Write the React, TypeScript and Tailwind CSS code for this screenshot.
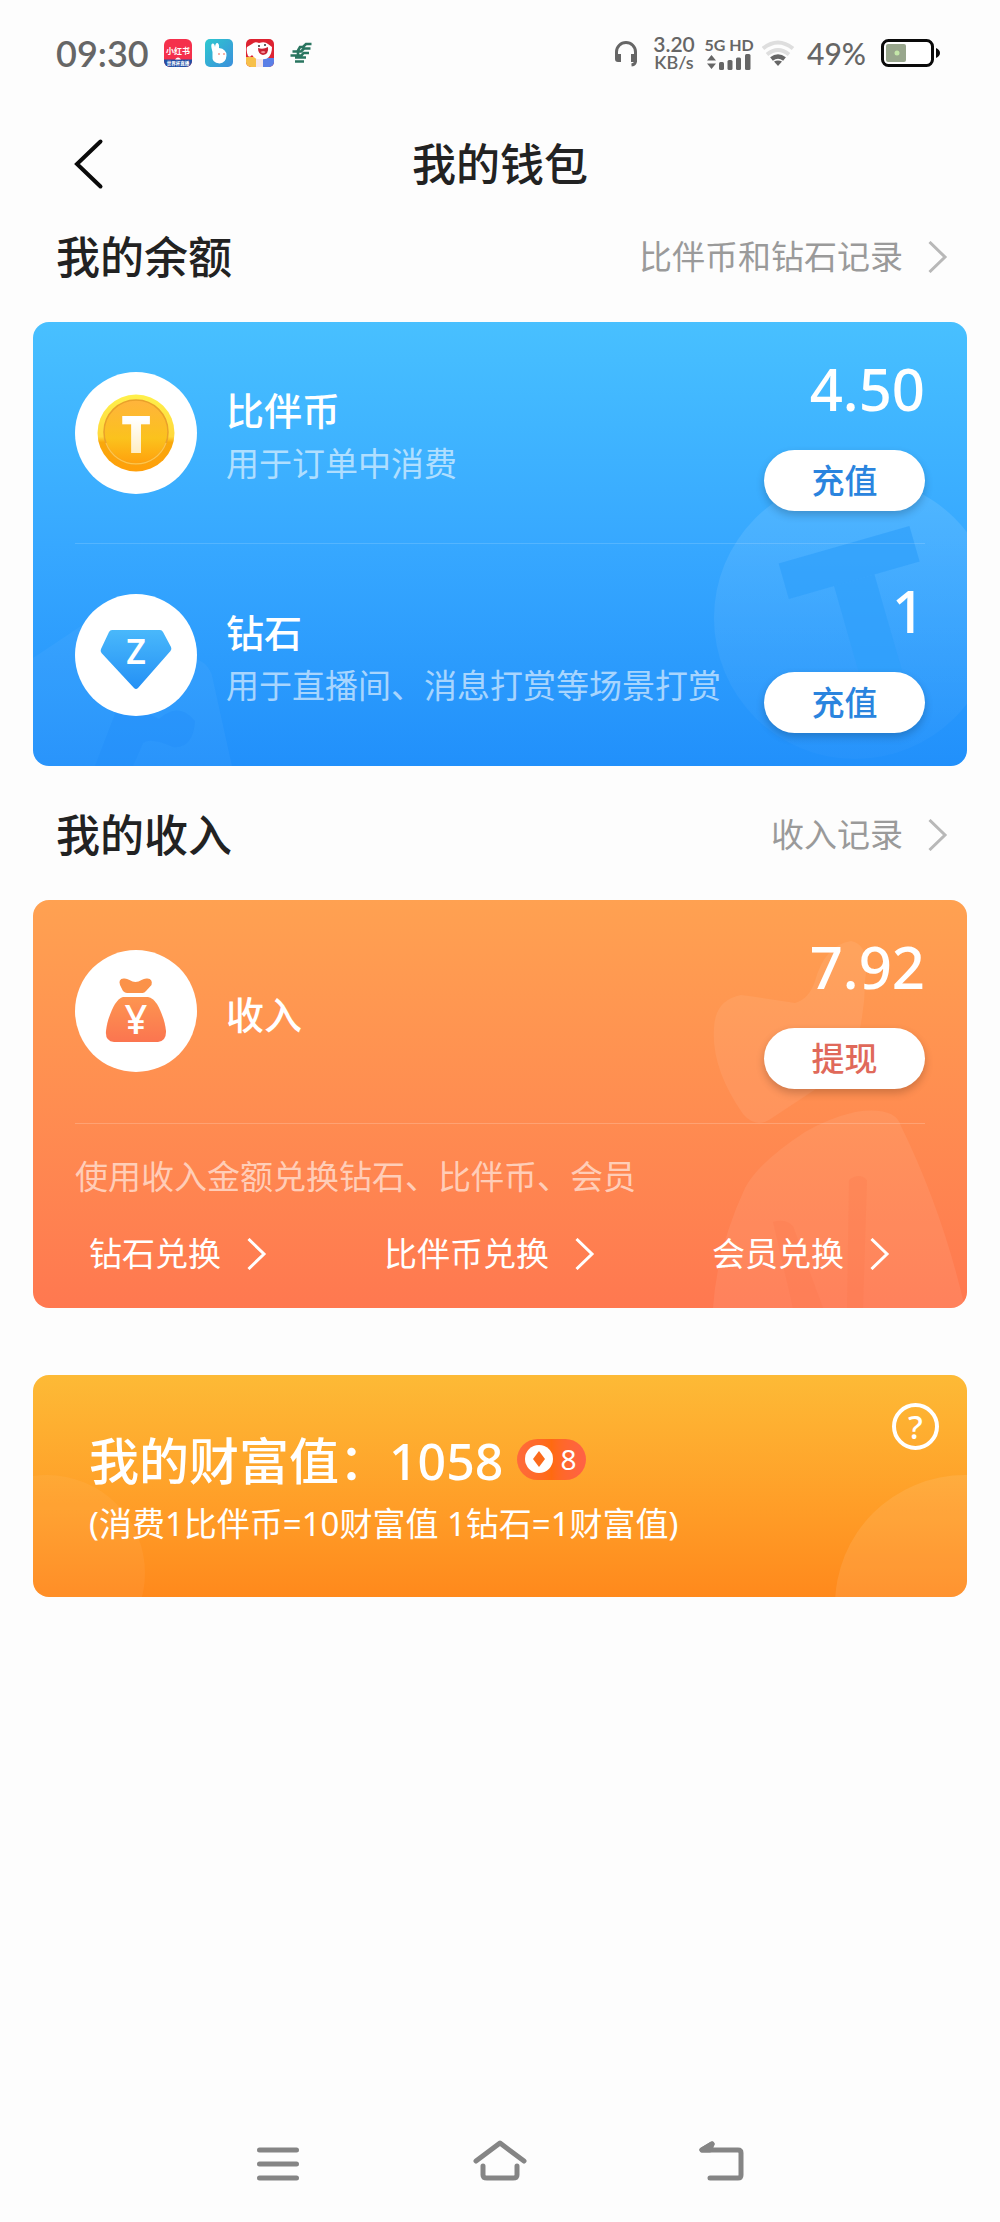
import type { ReactNode } from 'react'

const exchanges = [
  { key: 'diamond', label: '钻石兑换' },
  { key: 'coin', label: '比伴币兑换' },
  { key: 'vip', label: '会员兑换' },
]

function Chevron({ className }: { className?: string }) {
  return (
    <svg className={`w-5 h-8 shrink-0 ${className ?? ''}`} viewBox="0 0 20 32" fill="none" stroke="currentColor" strokeWidth="3">
      <path d="M1.500 1L17 16L1.500 31" />
    </svg>
  )
}

function CoinIcon() {
  return (
    <svg className="w-20 h-20" viewBox="0 0 80 80">
      <defs>
        <linearGradient id="coin-rim" x1="0" y1="0" x2="0" y2="1">
          <stop offset="0" stopColor="#fff04a" />
          <stop offset="0.55" stopColor="#ffd83c" />
          <stop offset="0.62" stopColor="#f9a80c" />
          <stop offset="1" stopColor="#ff9f0a" />
        </linearGradient>
        <linearGradient id="coin-face" x1="0" y1="0" x2="0" y2="1">
          <stop offset="0" stopColor="#ffb43c" />
          <stop offset="0.6" stopColor="#fbc21d" />
          <stop offset="1" stopColor="#ffa00c" />
        </linearGradient>
        <linearGradient id="coin-t" x1="0" y1="0" x2="0" y2="1">
          <stop offset="0.3" stopColor="#fff" />
          <stop offset="1" stopColor="#ffe6a8" />
        </linearGradient>
      </defs>
      <circle cx="40" cy="40" r="38.5" fill="url(#coin-rim)" />
      <circle cx="40" cy="39" r="32" fill="url(#coin-face)" stroke="#e9a02a" strokeWidth="1.5" />
      <path d="M10 50a32 32 0 0 0 60 0" fill="none" stroke="#ffc64a" strokeWidth="1.2" />
      <text x="40" y="60" textAnchor="middle" fontSize="51" className="font-['Noto_Sans',sans-serif] font-black" fill="url(#coin-t)">T</text>
    </svg>
  )
}

function DiamondIcon() {
  return (
    <svg className="w-20 h-20" viewBox="0 0 80 80">
      <defs>
        <linearGradient id="gem" x1="0" y1="0" x2="0" y2="1">
          <stop offset="0" stopColor="#49b8fb" />
          <stop offset="1" stopColor="#2490f5" />
        </linearGradient>
      </defs>
      <path d="M16 15h48q2 0 3 2l8 15q1 2-.5 4L42 73q-2 2-4 0L5.500 38Q4 36 5 34l8-17q1-2 3-2z" fill="url(#gem)" />
      <text x="40" y="49" textAnchor="middle" fontSize="34" className="font-['Noto_Sans',sans-serif] font-semibold" fill="#fff">Z</text>
    </svg>
  )
}

function BagIcon() {
  return (
    <svg className="w-20 h-20" viewBox="0 0 80 80">
      <defs>
        <linearGradient id="bag" x1="0" y1="0" x2="0" y2="1">
          <stop offset="0" stopColor="#fd9550" />
          <stop offset="1" stopColor="#fb7550" />
        </linearGradient>
      </defs>
      <path d="M31 22q-2 0-4-2l-3-6Q22 8 27.500 7.500q3-.5 6 1.500 3 2 6 2t6-2q3-2 6-1.500Q57 8 55.500 14L50 20q-1.500 2-3.500 2z" fill="#fb9249" />
      <path d="M27 26h25q5 1 9 7c4 7 8 17 9 27q.5 10-8 11H18q-9-1-8-11C11 50 15 40 19 33q4-6 8-7z" fill="url(#bag)" />
      <text x="40" y="63" textAnchor="middle" fontSize="40" className="font-['Noto_Sans',sans-serif] font-medium" fill="#fff">¥</text>
    </svg>
  )
}

function StatusBar() {
  return (
    <div className="flex items-center justify-between h-[106px] pl-[56px] pr-[59px] font-['Lato','Noto_Sans_CJK_SC',sans-serif] text-[#666]">
      <div className="flex items-center">
        <span className="text-[36px] leading-10 font-semibold">09:30</span>
        <svg className="w-7 h-7 ml-[15px]" viewBox="0 0 28 28">
          <rect width="28" height="28" rx="6" fill="#f5304c" />
          <path d="M0 20.500h28V22a6 6 0 0 1-6 6H6a6 6 0 0 1-6-6z" fill="#2350a5" />
          <path d="M11 20.500q3-4 6 0z" fill="#fff" />
          <text x="14" y="14.500" textAnchor="middle" fontSize="8" fontWeight="700" fill="#fff">小红书</text>
          <text x="14" y="26" textAnchor="middle" fontSize="4.500" fontWeight="700" fill="#fff">世界杯直播</text>
        </svg>
        <svg className="w-7 h-7 ml-[13px]" viewBox="0 0 28 28">
          <defs>
            <linearGradient id="rabbit" x1="0" y1="0" x2="1" y2="1">
              <stop offset="0" stopColor="#2ec8cf" />
              <stop offset="1" stopColor="#3b8fdc" />
            </linearGradient>
          </defs>
          <rect width="28" height="28" rx="5" fill="url(#rabbit)" />
          <path d="M7.500 13Q5 5 7.500 4.500 9.500 4 10 8 10.500 3.500 12.500 4 14.500 5 14 9q7.500 1 7.500 7.500-.5 7.500-7 8Q6.500 24 7.500 17z" fill="#fff" />
          <circle cx="14" cy="15" r="1" fill="#f49a8c" />
          <circle cx="19" cy="15" r="1" fill="#f49a8c" />
        </svg>
        <svg className="w-7 h-7 ml-[13px]" viewBox="0 0 28 28">
          <rect width="28" height="28" rx="5" fill="#dd2331" />
          <path d="M0 18h10v10H5a5 5 0 0 1-5-5z" fill="#f7c04a" />
          <path d="M17 19h11v4a5 5 0 0 1-5 5h-6z" fill="#5b7fe6" />
          <path d="M10 18h7v10h-7z" fill="#f6e7ea" />
          <path d="M1 8l5-3q3-3 7-1 6-2 9 1l4 3q0 6-3 10-3 3-8 2-6 1-9-4-2 3-4 1Q0 12 1 8z" fill="#fff" />
          <path d="M12 9q5 2 10-1 1 7-5 8-5-1-5-7z" fill="#c82032" />
          <path d="M14.500 13q3-2 5 0-2 2.500-5 0z" fill="#f48c96" />
          <circle cx="13" cy="7" r="1" fill="#333" />
          <circle cx="19" cy="6" r="1" fill="#333" />
        </svg>
        <svg className="w-6 h-6 ml-[15px]" viewBox="0 0 24 24" fill="none" stroke="#2a7560" strokeWidth="2.600">
          <path d="M22.500 3H17l-3 3h-3L9 9.500M21.500 7.500H15l-3 3H3.500M20 12h-5.500l-2 2.500H1.500M17 16.500H6M15 20.500H6M9 9v6" />
        </svg>
      </div>
      <div className="flex items-center">
        <svg className="w-6 h-7" viewBox="0 0 24 28" fill="none" stroke="currentColor" strokeWidth="3">
          <path d="M2.500 18v-5a9.500 9.500 0 0 1 19 0v9q0 3.500-4 4" />
          <path d="M1 15h6v8H4q-3 0-3-3zM17 15h6v8h-6z" fill="currentColor" stroke="none" />
        </svg>
        <div className="w-[46px] ml-[13px] text-center font-semibold">
          <div className="text-[21px] leading-[19px]">3.20</div>
          <div className="text-[18px] leading-[19px]">KB/s</div>
        </div>
        <div className="w-[46px] ml-[9px] flex flex-col items-center">
          <span className="text-[16px] leading-[18px] font-bold whitespace-nowrap">5G HD</span>
          <svg className="w-11 h-4" viewBox="0 0 44 16" fill="currentColor">
            <path d="M0 6.500L4.500 1 9 6.500zM0 9.500h9L4.500 15z" />
            <rect x="12" y="8" width="5" height="8" rx="1.500" />
            <rect x="20.500" y="6" width="5" height="10" rx="1.500" />
            <rect x="29" y="3.500" width="5" height="12.500" rx="1.500" />
            <rect x="38" y="0" width="5.500" height="16" rx="1.500" />
          </svg>
        </div>
        <svg className="w-[34px] h-7 ml-[9px]" viewBox="0 0 34 28" fill="none" strokeWidth="4">
          <path d="M2 9.500q15-12 30 0M6 15.500q11-9 22 0" stroke="#dedede" />
          <path d="M10.500 20q6.500-5 13 0" stroke="currentColor" strokeWidth="4.500" />
          <path d="M13 22.500q4-2 8 0L17 27z" fill="currentColor" />
        </svg>
        <span className="text-[30px] leading-10 font-medium ml-[12px]">49%</span>
        <svg className="w-[60px] h-7 ml-[15px]" viewBox="0 0 60 28">
          <rect x="1.500" y="1.500" width="50" height="25" rx="6" fill="#fff" stroke="#0a0a0a" strokeWidth="3" />
          <rect x="5" y="5" width="20" height="18" rx="2" fill="#98a68c" />
          <circle cx="16" cy="14" r="2.500" fill="#c4e6a8" />
          <path d="M55 9q4 2 4 5t-4 5z" fill="#0a0a0a" />
        </svg>
      </div>
    </div>
  )
}

function SectionHeader({ title, link }: { title: string; link: string }) {
  return (
    <div className="flex items-center justify-between h-[134px] pt-1 pl-[56px] pr-[52px]">
      <h2 className="text-[44px] leading-[60px] font-medium text-[#222]">{title}</h2>
      <a href="#" className="flex items-center gap-[25px] text-[33px] leading-[48px] text-[#9a9a9a]">
        {link}
        <Chevron className="text-[#b8b8b8]" />
      </a>
    </div>
  )
}

interface AccountRowProps {
  icon: ReactNode
  name: string
  desc?: string
  amount: string
  action: string
  actionColor: string
}

function AccountRow({ icon, name, desc, amount, action, actionColor }: AccountRowProps) {
  return (
    <div className="relative flex items-center h-[222px] mx-[42px]">
      <div className="flex items-center justify-center w-[122px] h-[122px] shrink-0 rounded-full bg-white">{icon}</div>
      <div className="flex-1 min-w-0 pt-2 pb-[2px] ml-[29px]">
        <div className="text-[38px] leading-[52px] font-medium text-white">{name}</div>
        {desc && <div className="pt-1 text-[33px] leading-[48px] text-white/60 whitespace-nowrap">{desc}</div>}
      </div>
      <div className="flex flex-col items-end pt-1">
        <span className="text-[58px] leading-[60px] font-medium text-white">{amount}</span>
        <button
          className={`mt-[31px] w-[161px] h-[61px] rounded-full bg-white text-[33px] leading-[48px] font-medium shadow-[0_4px_8px_rgba(0,0,0,0.2)] ${actionColor}`}
        >
          {action}
        </button>
      </div>
    </div>
  )
}

function BalanceCard() {
  return (
    <section className="relative overflow-hidden mx-[33px] rounded-2xl bg-linear-to-b from-[#48c0ff] via-[#37a8ff] to-[#2190fb]">
      {/* 背景水印 */}
      <svg className="absolute right-0 bottom-0 w-[260px] h-[300px]" viewBox="0 0 260 300">
        <defs>
          <linearGradient id="coin-mark" x1="0" y1="0" x2="0" y2="1">
            <stop offset="0" stopColor="#fff" stopOpacity="0.11" />
            <stop offset="1" stopColor="#fff" stopOpacity="0.02" />
          </linearGradient>
        </defs>
        <circle cx="148" cy="152" r="141" fill="url(#coin-mark)" />
        <g transform="translate(142 96) rotate(-16)" fill="#2f9ffb" fillOpacity="0.7">
          <rect x="-68" y="-18" width="136" height="37" />
          <rect x="-21" y="19" width="42" height="110" />
        </g>
      </svg>
      <svg className="absolute left-0 bottom-0 w-[200px] h-[170px]" viewBox="0 0 200 170">
        <path d="M0 62L48 30 166 64q12 6 14 20l19 86H0z" fill="#fff" fillOpacity="0.04" />
        <path d="M82 118q10-10 24-5l20 10q20-18 36 2-2 28-22 26-22-10-30-4l-10 23H62z" fill="#1f8df9" fillOpacity="0.35" />
      </svg>
      <AccountRow icon={<CoinIcon />} name="比伴币" desc="用于订单中消费" amount="4.50" action="充值" actionColor="text-[#2a84de]" />
      <div className="relative mx-[42px] -mt-px h-px bg-white/15" />
      <AccountRow icon={<DiamondIcon />} name="钻石" desc="用于直播间、消息打赏等场景打赏" amount="1" action="充值" actionColor="text-[#2a84de]" />
    </section>
  )
}

function IncomeCard() {
  return (
    <section className="relative overflow-hidden mx-[33px] rounded-2xl bg-linear-to-b from-[#ffa151] to-[#ff7850]">
      <svg className="absolute right-0 bottom-0 w-[260px] h-[370px]" viewBox="0 0 260 370">
        <path d="M7 90Q8 62 34 57q30 4 54 8 14-4 20-22 10-36 36-40 20 4 14 40 0 40-14 78-6 18-26 24L62 182q-14 8-26-6Q4 130 7 90z" fill="#fff" fillOpacity="0.07" />
        <path d="M6 370Q10 310 38 250q14-26 60-56 24-14 50-20 40-6 46 14 42 86 64 182z" fill="#fff" fillOpacity="0.07" />
        <path d="M142 242q10-8 18 0l-4 128h-16zM66 284q12-4 20 4l30 82H86z" fill="#fb7148" fillOpacity="0.2" />
      </svg>
      <AccountRow icon={<BagIcon />} name="收入" amount="7.92" action="提现" actionColor="text-[#e0695a]" />
      <div className="relative mx-[42px] mt-px h-px bg-white/20" />
      <p className="relative mx-[42px] pt-[29px] text-[33px] leading-[48px] text-white/60">使用收入金额兑换钻石、比伴币、会员</p>
      <div className="relative flex items-center justify-between mt-[29px] pb-[30px] pl-[56px] pr-[77px]">
        {exchanges.map((item) => (
          <a key={item.key} href="#" className="flex items-center gap-[26px] text-[33px] leading-[48px] text-white">
            {item.label}
            <Chevron />
          </a>
        ))}
      </div>
    </section>
  )
}

function WealthCard() {
  return (
    <section className="relative overflow-hidden mx-[33px] mt-[67px] h-[222px] pt-[54px] pl-[56px] rounded-2xl bg-linear-to-b from-[#fdba36] to-[#ff891c] text-white">
      <svg className="absolute right-0 bottom-0 w-[132px] h-[122px]" viewBox="0 0 132 122">
        <circle cx="130" cy="130" r="130" fill="#fff" fillOpacity="0.09" />
      </svg>
      <svg className="absolute left-0 bottom-0 w-[112px] h-[122px]" viewBox="0 0 112 122">
        <circle cx="14" cy="98" r="98" fill="#fff" fillOpacity="0.05" />
      </svg>
      <div className="relative flex items-center">
        <h2 className="text-[50px] leading-[64px] font-medium">我的财富值：1058</h2>
        <span className="flex items-center gap-[7px] h-[41px] ml-[14px] mb-1 px-2 rounded-full bg-linear-to-r from-[#ff6a3c] via-[#ff6a10] to-[#ff6246]">
          <svg className="w-7 h-7" viewBox="0 0 28 28">
            <circle cx="14" cy="14" r="14" fill="#fff" />
            <path d="M14 6l6 8-6 8-6-8z" fill="#fb6a1c" />
          </svg>
          <span className="w-[18px] text-[28px] leading-8">8</span>
        </span>
      </div>
      <p className="relative mt-[7px] text-[33px] leading-[48px]">(消费1比伴币=10财富值 1钻石=1财富值)</p>
      <button aria-label="财富值说明" className="absolute right-[28px] top-[28px] w-[47px] h-[47px] rounded-full border-4 border-white text-[33px] leading-[39px] font-medium">
        ?
      </button>
    </section>
  )
}

function SystemNav() {
  return (
    <nav className="flex justify-center gap-[166px] mt-auto pb-[30px] text-[#858585]">
      <button aria-label="最近任务">
        <svg className="w-14 h-14" viewBox="0 0 56 56" fill="none" stroke="currentColor" strokeWidth="5" strokeLinecap="round">
          <path d="M9.500 14h37M9.500 28h37M9.500 42h37" />
        </svg>
      </button>
      <button aria-label="主页">
        <svg className="w-14 h-14" viewBox="0 0 56 56" fill="none" stroke="currentColor" strokeWidth="5" strokeLinecap="round" strokeLinejoin="round">
          <path d="M4 25L28 7l24 18M11 30v9q0 3 4 3h26q4 0 4-3v-9" />
        </svg>
      </button>
      <button aria-label="返回">
        <svg className="w-14 h-14" viewBox="0 0 56 56" fill="none" stroke="currentColor" strokeWidth="5" strokeLinecap="round" strokeLinejoin="round">
          <path d="M18 8L8 14h36q3 0 3 3v22q0 3-3 3H16" />
          <path d="M18 8L8 14h8z" fill="currentColor" />
        </svg>
      </button>
    </nav>
  )
}

export default function App() {
  return (
    <div className="flex flex-col min-h-screen bg-[#fdfdfd] font-['Noto_Sans','Noto_Sans_CJK_SC',sans-serif]">
      <StatusBar />
      <header className="grid grid-cols-[1fr_auto_1fr] items-center h-[82px] pt-7 px-[72px]">
        <button aria-label="返回" className="justify-self-start">
          <svg className="w-8 h-[52px]" viewBox="0 0 32 52" fill="none" stroke="#0a0a0a" strokeWidth="4" strokeLinecap="round">
            <path d="M28.500 3.500L5 26l23.500 22.500" />
          </svg>
        </button>
        <h1 className="text-[44px] leading-[60px] font-medium text-[#222]">我的钱包</h1>
      </header>
      <main>
        <SectionHeader title="我的余额" link="比伴币和钻石记录" />
        <BalanceCard />
        <SectionHeader title="我的收入" link="收入记录" />
        <IncomeCard />
        <WealthCard />
      </main>
      <SystemNav />
    </div>
  )
}
